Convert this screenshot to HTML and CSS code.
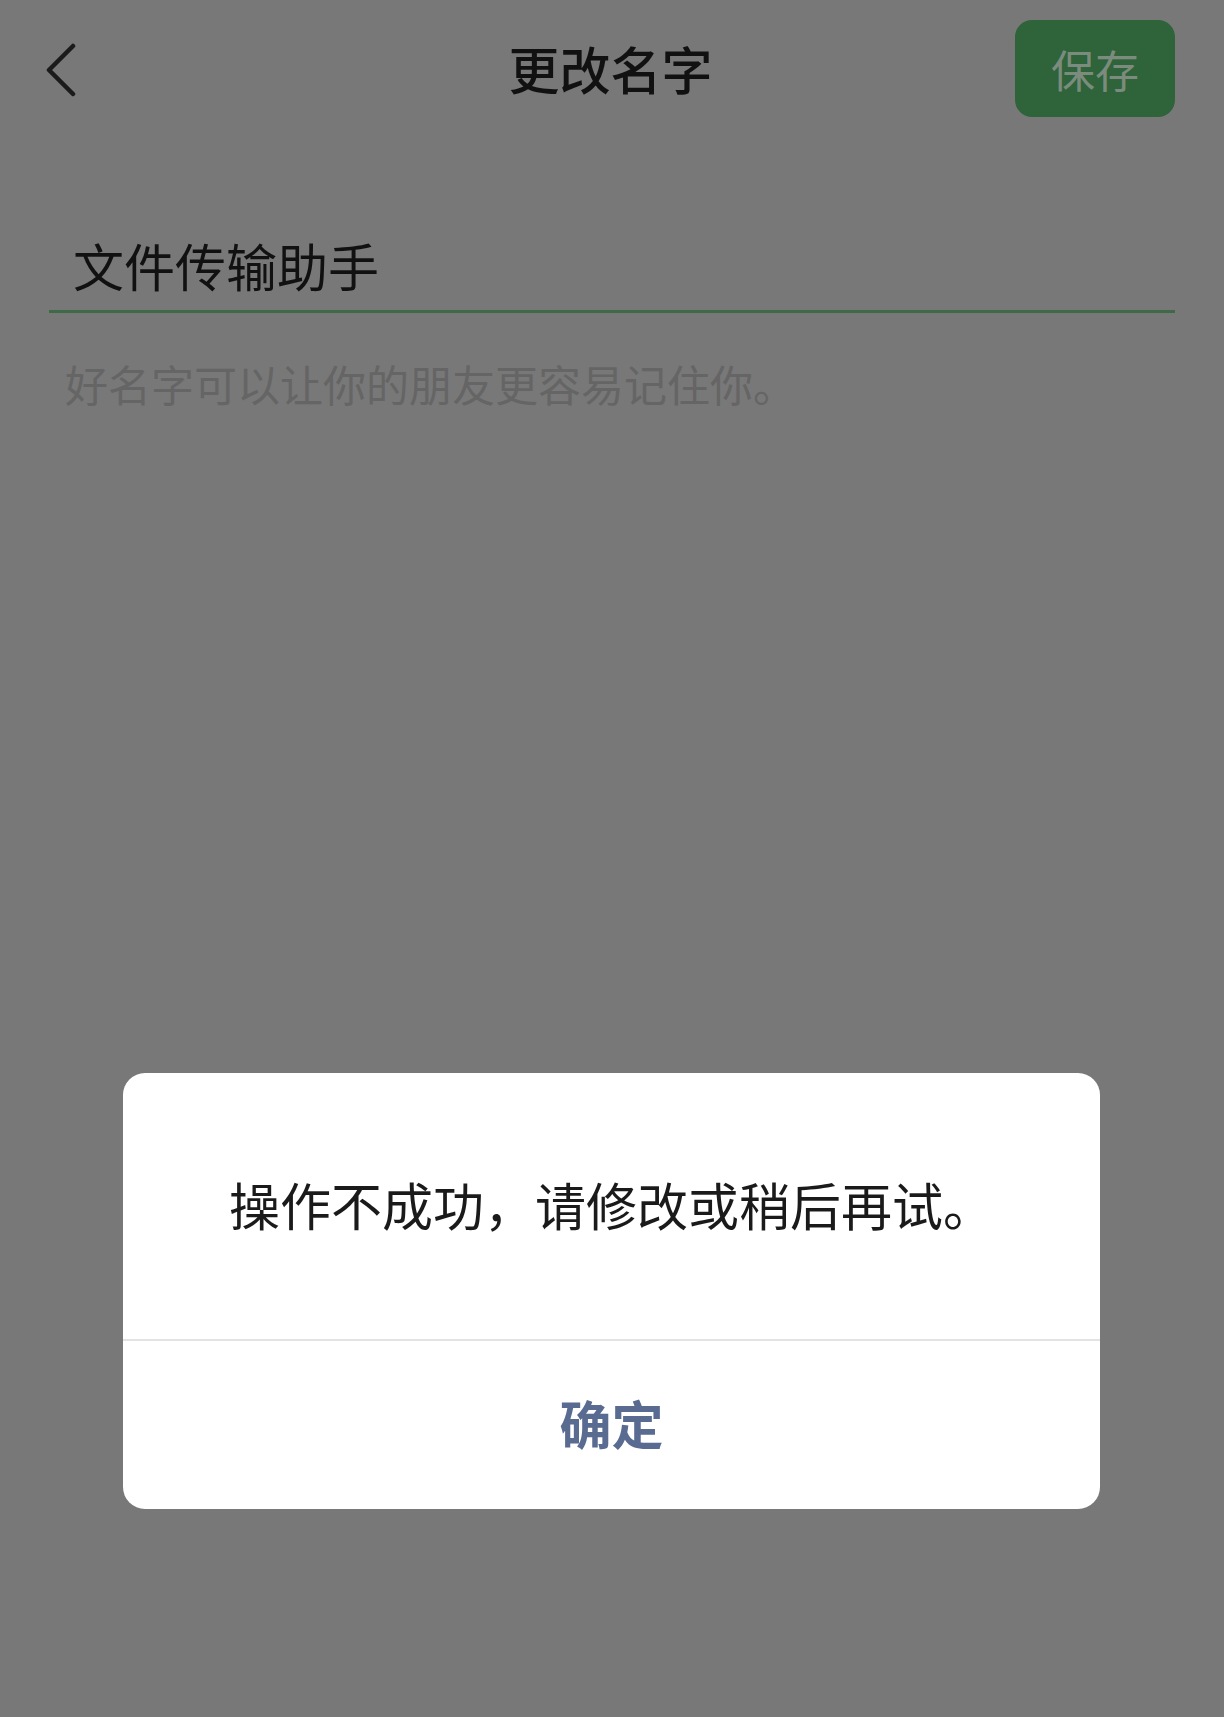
FILE: index.html
```html
<!DOCTYPE html>
<html lang="zh-CN">
<head>
    <meta charset="UTF-8">
    <meta name="viewport" content="width=device-width, initial-scale=1.0">
    <title>更改名字</title>
    <link rel="stylesheet" href="styles.css">
</head>
<body>
    <div class="page">
        <div class="header">
            <span class="back">
                <svg width="40" height="60" viewBox="0 0 40 60">
                    <polyline points="27,5 3,29 27,53" fill="none" stroke="#1b1b1b" stroke-width="4.5" stroke-linecap="round" stroke-linejoin="round"/>
                </svg>
            </span>
            <h1>更改名字</h1>
            <button class="save">保存</button>
        </div>

        <div class="name-field">文件传输助手</div>
        <p class="hint">好名字可以让你的朋友更容易记住你。</p>
    </div>

    <!-- 弹窗 -->
    <div class="dialog">
        <div class="dialog-msg">操作不成功，请修改或稍后再试。</div>
        <div class="dialog-btn">确定</div>
    </div>
</body>
</html>
```

FILE: styles.css
```css
body {
    margin: 0;
    background: #787878; /* 遮罩后的灰色 */
    font-family: "Noto Sans CJK SC", "Noto Sans", sans-serif;
    width: 1224px;
    height: 1717px;
    overflow: hidden;
    position: relative;
}
.header {
    display: grid;
    grid-template-columns: 1fr auto 1fr;
    align-items: center;
    padding: 20px 49px 0 46px;
    height: 97px;
}
.back {
    display: flex;
    align-items: center;
    height: 60px;
    margin-top: 4px;
}
.header h1 {
    margin: 0;
    font-size: 51px;
    font-weight: 500;
    color: #111111;
    line-height: 97px;
}
.save {
    justify-self: end;
    width: 160px;
    height: 97px;
    border: none;
    border-radius: 17px;
    background-color: #2f6339;
    color: #7b8c7e;
    font-family: inherit;
    font-size: 44px;
    padding: 0;
}
.name-field {
    margin: 103px 49px 0 49px;
    padding-left: 24px;
    height: 90px;
    line-height: 90px;
    font-size: 51px;
    color: #111111;
    border-bottom: 3px solid #3e6a47;
}
.hint {
    margin: 40px 49px 0 49px;
    padding-left: 16px;
    line-height: 60px;
    font-size: 43px;
    color: #656565;
}
.dialog {
    position: absolute;
    left: 123px;
    top: 1073px;
    width: 977px;
    background: #ffffff;
    border-radius: 22px;
    overflow: hidden;
}
.dialog-msg {
    height: 268px;
    padding-bottom: 4px;
    box-sizing: border-box;
    display: flex;
    align-items: center;
    justify-content: center;
    font-size: 51px;
    color: #1a1a1a;
    border-bottom: 2px solid #e3e3e3;
}
.dialog-btn {
    height: 168px;
    padding-bottom: 6px;
    box-sizing: border-box;
    display: flex;
    align-items: center;
    justify-content: center;
    font-size: 52px;
    font-weight: bold;
    color: #5a6b92;
}
```
